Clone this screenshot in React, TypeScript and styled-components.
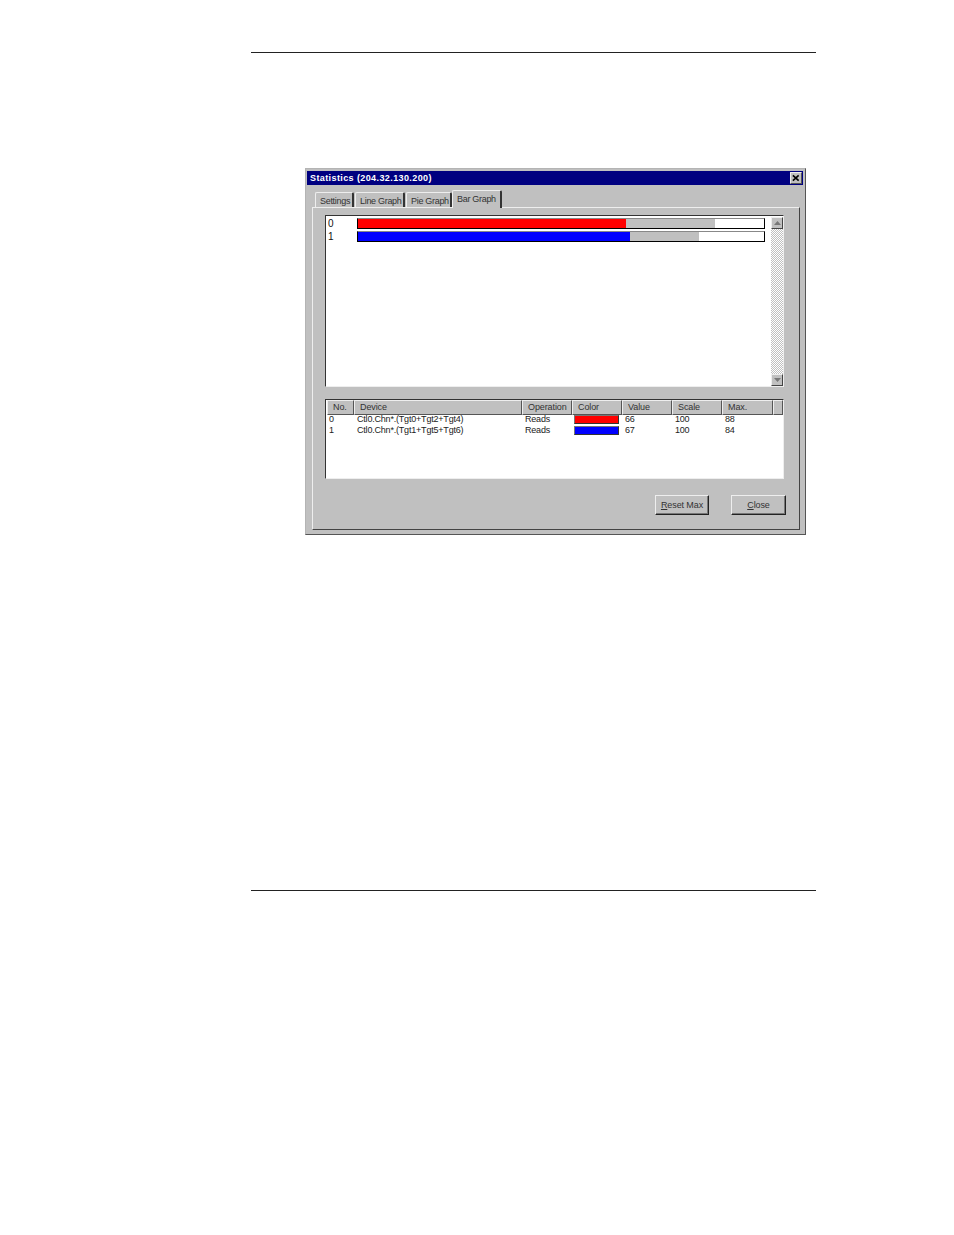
import React from "react";
import styled, { createGlobalStyle } from "styled-components";

const GlobalStyle = createGlobalStyle`
  html, body {
    margin: 0;
    padding: 0;
    background: #fff;
  }
`;

const Page = styled.div`
  width: 954px;
  height: 1235px;
  padding: 52px 138px 0 251px;
  box-sizing: border-box;
  overflow: hidden;
`;

const Rule = styled.div<{ $gap?: number }>`
  height: 1px;
  background: #222;
  margin-top: ${(p) => p.$gap ?? 0}px;
`;

const Dialog = styled.div`
  width: 501px;
  height: 367px;
  margin: 115px 0 0 54px;
  box-sizing: border-box;
  background: #c0c0c0;
  border: 1px solid #b4b4b4;
  border-right-color: #555;
  border-bottom-color: #555;
  padding: 2px 2px 0 1px;
  font-family: "Liberation Sans", Arial, sans-serif;
  font-size: 9px;
  color: #222;
`;

const TitleBar = styled.div`
  height: 14px;
  background: #000080;
  color: #fff;
  font-weight: bold;
  font-size: 9px;
  letter-spacing: 0.4px;
  display: flex;
  align-items: center;
  justify-content: space-between;
  padding: 0 1px 0 3px;
`;

const CloseBox = styled.div`
  width: 12px;
  height: 12px;
  box-sizing: border-box;
  background: #c0c0c0;
  border: 1px solid;
  border-color: #eee #555 #555 #eee;
  display: flex;
  align-items: center;
  justify-content: center;
`;

const TabRow = styled.div`
  display: flex;
  align-items: flex-end;
  height: 22px;
  padding-left: 8px;
  position: relative;
  z-index: 1;
`;

const Tab = styled.div<{ $active?: boolean; $w: number }>`
  width: ${(p) => p.$w}px;
  height: ${(p) => (p.$active ? 18 : 15)}px;
  box-sizing: border-box;
  background: #c0c0c0;
  border: 1px solid #eee;
  border-right: 2px solid #333;
  border-bottom: none;
  border-radius: 2px 2px 0 0;
  margin-bottom: ${(p) => (p.$active ? -1 : 0)}px;
  margin-left: ${(p) => (p.$active ? -1 : 0)}px;
  margin-right: ${(p) => (p.$active ? 0 : 1)}px;
  padding: 3px 0 0 4px;
  letter-spacing: -0.3px;
  line-height: 11px;
  white-space: nowrap;
  color: #333;
`;

const TabPanel = styled.div`
  width: 488px;
  height: 323px;
  box-sizing: border-box;
  margin-left: 5px;
  border: 1px solid;
  border-color: #eee #444 #444 #eee;
  padding: 7px 15px 0 12px;
`;

const Sunken = styled.div<{ $h: number }>`
  height: ${(p) => p.$h}px;
  box-sizing: border-box;
  background: #fff;
  border: 1px solid;
  border-color: #333 #eee #eee #333;
`;

const ChartBox = styled(Sunken)`
  display: flex;
  padding: 2px 0 0 2px;
`;

const ChartRows = styled.div`
  flex: none;
  width: 442px;
  display: flex;
  flex-direction: column;
  gap: 2px;
`;

const ChartRow = styled.div`
  display: flex;
  align-items: center;
  height: 11px;
  font-size: 10px;
  color: #111;
`;

const ChartIndex = styled.span`
  width: 29px;
  flex: none;
`;

const Track = styled.div`
  width: 408px;
  height: 11px;
  flex: none;
  box-sizing: border-box;
  border: 1px solid #000;
  border-top-color: #888;
  background: #fff;
  display: flex;
`;

const Segment = styled.div<{ $color: string }>`
  height: 100%;
  background: ${(p) => p.$color};
`;

const ScrollBar = styled.div`
  width: 12px;
  margin: -1px 0 0 1px;
  height: 169px;
  display: flex;
  flex-direction: column;
  justify-content: space-between;
  background: repeating-conic-gradient(#c0c0c0 0 25%, #fff 0 50%) 0 0 / 2px 2px;
`;

const ScrollBtn = styled.div`
  width: 12px;
  height: 12px;
  box-sizing: border-box;
  background: #c0c0c0;
  border: 1px solid;
  border-color: #eee #444 #444 #eee;
  display: flex;
  align-items: center;
  justify-content: center;
`;

const ListBox = styled(Sunken)`
  margin-top: 12px;
`;

const columns = "27px 168px 50px 50px 50px 50px 51px 1fr";

const HeaderRow = styled.div`
  display: grid;
  grid-template-columns: ${columns};
  height: 14px;
  padding-left: 1px;
`;

const HeaderCell = styled.div`
  background: #c0c0c0;
  box-sizing: border-box;
  border: 1px solid;
  border-color: #eee #555 #555 #eee;
  padding-left: 5px;
  line-height: 13px;
  letter-spacing: -0.1px;
  color: #333;
  white-space: nowrap;
`;

const DataRow = styled.div`
  display: grid;
  grid-template-columns: ${columns};
  height: 11px;
  padding-left: 1px;
  line-height: 11px;
  letter-spacing: -0.2px;
  color: #222;
  white-space: nowrap;
`;

const DataCell = styled.div`
  padding-left: 3px;

  &:first-child {
    padding-left: 2px;
  }
`;

const Swatch = styled.div<{ $color: string }>`
  width: 45px;
  height: 9px;
  margin: 1px 0 0 2px;
  box-sizing: border-box;
  background: ${(p) => p.$color};
  border: 1px solid #777;
  border-right-color: #333;
  border-bottom-color: #333;
`;

const ButtonRow = styled.div`
  display: flex;
  justify-content: flex-end;
  gap: 22px;
  margin: 16px -2px 0 0;
`;

const Button = styled.button<{ $w: number }>`
  width: ${(p) => p.$w}px;
  height: 20px;
  padding: 0;
  box-sizing: border-box;
  background: #c0c0c0;
  border: 1px solid;
  border-color: #eee #222 #222 #eee;
  box-shadow: inset -1px -1px 0 #777;
  font-family: inherit;
  font-size: 9px;
  letter-spacing: -0.1px;
  color: #333;
`;

const Key = styled.span`
  text-decoration: underline;
`;

const bars = [
  { id: 0, value: 66, max: 88, color: "#ff0000" },
  { id: 1, value: 67, max: 84, color: "#0000ff" },
];

const headers = ["No.", "Device", "Operation", "Color", "Value", "Scale", "Max.", ""];

const rows = [
  { no: "0", device: "Ctl0.Chn*.(Tgt0+Tgt2+Tgt4)", op: "Reads", color: "#ff0000", value: 66, scale: 100, max: 88 },
  { no: "1", device: "Ctl0.Chn*.(Tgt1+Tgt5+Tgt6)", op: "Reads", color: "#0000ff", value: 67, scale: 100, max: 84 },
];

const App = () => {
  return (
    <Page>
      <GlobalStyle />
      <Rule />
      <Dialog>
        <TitleBar>
          <span>Statistics (204.32.130.200)</span>
          <CloseBox>
            <svg width="8" height="8" viewBox="0 0 9 9">
              <path d="M1 1.5L7.5 7.5M7.5 1.5L1 7.5" stroke="#000" strokeWidth="1.8" />
            </svg>
          </CloseBox>
        </TitleBar>
        <TabRow>
          <Tab $w={39}>Settings</Tab>
          <Tab $w={50}>Line Graph</Tab>
          <Tab $w={46}>Pie Graph</Tab>
          <Tab $w={50} $active>Bar Graph</Tab>
        </TabRow>
        <TabPanel>
          <ChartBox $h={172}>
            <ChartRows>
              {bars.map((b) => (
                <ChartRow key={b.id}>
                  <ChartIndex>{b.id}</ChartIndex>
                  <Track>
                    <Segment $color={b.color} style={{ width: `${b.value}%` }} />
                    <Segment $color="#c0c0c0" style={{ width: `${b.max - b.value}%` }} />
                  </Track>
                </ChartRow>
              ))}
            </ChartRows>
            <ScrollBar>
              <ScrollBtn>
                <svg width="7" height="4" viewBox="0 0 7 4"><path d="M3.5 0L7 4H0Z" fill="#777" /></svg>
              </ScrollBtn>
              <ScrollBtn>
                <svg width="7" height="4" viewBox="0 0 7 4"><path d="M0 0H7L3.5 4Z" fill="#777" /></svg>
              </ScrollBtn>
            </ScrollBar>
          </ChartBox>
          <ListBox $h={80}>
            <HeaderRow>
              {headers.map((h, i) => (
                <HeaderCell key={i}>{h}</HeaderCell>
              ))}
            </HeaderRow>
            {rows.map((r) => (
              <DataRow key={r.no}>
                <DataCell>{r.no}</DataCell>
                <DataCell>{r.device}</DataCell>
                <DataCell>{r.op}</DataCell>
                <Swatch $color={r.color} />
                <DataCell>{r.value}</DataCell>
                <DataCell>{r.scale}</DataCell>
                <DataCell>{r.max}</DataCell>
              </DataRow>
            ))}
          </ListBox>
          <ButtonRow>
            <Button $w={54}><Key>R</Key>eset Max</Button>
            <Button $w={55}><Key>C</Key>lose</Button>
          </ButtonRow>
        </TabPanel>
      </Dialog>
      <Rule $gap={355} />
    </Page>
  );
};

export default App;
